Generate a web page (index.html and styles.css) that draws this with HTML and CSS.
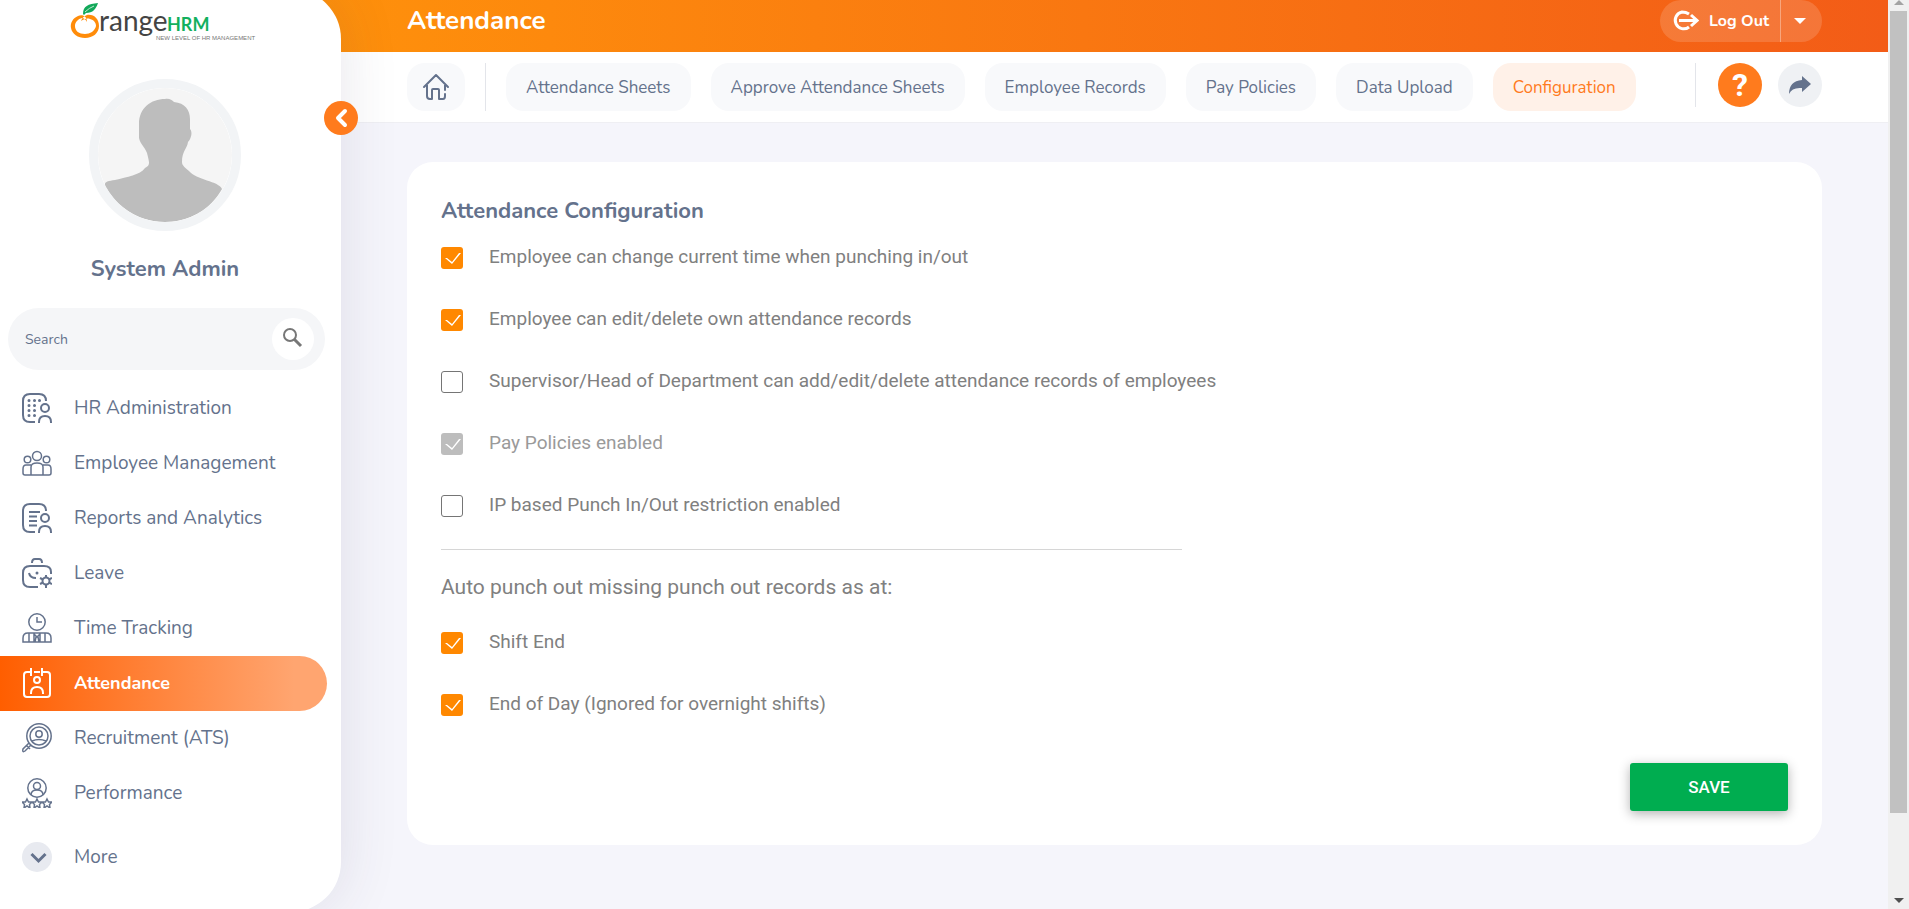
FILE: index.html
```
<!DOCTYPE html>
<html lang="en">
  <head>
    <meta charset="UTF-8" />
    <meta name="viewport" content="width=device-width, initial-scale=1.0" />
    <title>Attendance Configuration</title>
    <link rel="stylesheet" href="styles.css">
  </head>
  <body>
    <div class="app">
      <aside class="sidebar">
        <a class="logo" href="#" aria-label="OrangeHRM">
          <svg width="190" height="40" viewBox="0 0 190 40">
            <path fill-rule="evenodd" d="M8 13C3 15 0 20 1 25C2 31 8 35 15 35C23 35 29 30 29 23C29 16 24 11 17 12C14 13 12 15 11 18C14 16 17 15 20 16C24 17 26 20 26 23C25 28 20 31 15 31C9 31 5 28 5 23C5 19 8 16 12 15C14 15 16 17 17 19C17 14 13 11 8 13Z" fill="#ff8c0a" />
            <path d="M13 11C13 3 18 1 28 0C26 6 23 10 16 10L14 12Z" fill="#12a85a" />
            <path d="M15 9Q19 5 24 3" stroke="#bfe8cf" fill="none" />
            <text x="29" y="28" class="logo-range">range</text>
            <text x="97" y="28" class="logo-hrm">HRM</text>
            <text x="86" y="37" class="logo-tag">NEW LEVEL OF HR MANAGEMENT</text>
          </svg>
        </a>

        <div class="avatar">
          <svg width="134" height="134" viewBox="0 0 134 134">
            <circle cx="67" cy="67" r="67" fill="#f5f5f5" />
            <path d="M67 11C71 10 74 12 76 14C87 15 92 22 92 31L92 41C95 44 93 51 90 54C89 61 84 63 84 74C84 78 88 80 91 83C98 92 121 93 124 101C112 122 92 134 67 134C40 134 19 119 7 98C6 93 11 93 17 92C29 89 42 87 47 80C53 77 51 74 49 65C47 59 42 56 41 50L41 36C41 20 53 11 67 11Z" fill="#bdbdbd" />
          </svg>
        </div>
        <div class="user-name">System Admin</div>

        <form class="search">
          <input type="text" class="search-input" placeholder="Search" aria-label="Search" />
          <button type="button" class="search-btn" aria-label="Search menu">
            <svg width="24" height="24" viewBox="0 0 24 24" fill="none" stroke="#777" stroke-width="2">
              <circle cx="9" cy="8" r="6" />
              <path d="M13 12L20 19" stroke-width="3" />
            </svg>
          </button>
        </form>

        <ul class="menu">
          <li>
            <a href="#">
              <svg class="icon" viewBox="0 0 30 30">
                <path d="M13 29H8Q1 29 1 22V8Q1 1 8 1H17Q24 1 24 8" />
                <circle cx="23" cy="15" r="4" />
                <path d="M17 30V29Q17 23 23 23T29 29V30" />
                <path class="dots" d="M7 7.500h.01M12.500 7.500h.01M17.500 7.500h.01M7 12.500h.01M12.500 12.500h.01M7 17.500h.01M12.500 17.500h.01M7 22.500h.01M12.500 22.500h.01" />
              </svg>
              HR Administration
            </a>
          </li>
          <li>
            <a href="#">
              <svg class="icon thin" viewBox="0 0 30 30">
                <circle cx="15" cy="8" r="4.500" />
                <circle cx="5.500" cy="11.500" r="3.300" />
                <circle cx="24.500" cy="11.500" r="3.300" />
                <path d="M9 27V19Q9 15 15 15T21 19V27M9 17H4Q1 17 1 21V25Q1 27 3 27H27Q29 27 29 25V21Q29 17 26 17H21" />
              </svg>
              Employee Management
            </a>
          </li>
          <li>
            <a href="#">
              <svg class="icon" viewBox="0 0 30 30">
                <path d="M13 29H8Q1 29 1 22V8Q1 1 8 1H17Q24 1 24 8" />
                <circle cx="23" cy="15" r="4" />
                <path d="M17 30V29Q17 23 23 23T29 29V30M7 9H18M7 13.500H15M7 18H15M7 22.500H15" />
              </svg>
              Reports and Analytics
            </a>
          </li>
          <li>
            <a href="#">
              <svg class="icon" viewBox="0 0 30 30">
                <path d="M16 29H8Q1 29 1 22V15Q1 8 8 8H22Q29 8 29 14V16M10 5Q10 1 13 1H17Q20 1 20 5M7 15Q8 20 14 20" />
                <path class="dots" d="M15 15h.01" />
                <circle cx="24" cy="23" r="3.500" />
                <path d="M24 17V20M24 26V30M18 20L21 21.500M27 24.500L30 26M18 26L21 24.500M27 21.500L30 20" />
              </svg>
              Leave
            </a>
          </li>
          <li>
            <a href="#">
              <svg class="icon thin" viewBox="0 0 30 30">
                <circle cx="15" cy="9" r="8.200" />
                <path d="M15 4V9H20M1 29V25Q1 20 6 20H24Q29 20 29 25V29ZM7 20V29M23 20V29M12 20V29M18 20V29M12 21L15 24L18 21M13 29L14 24H16L17 29" />
              </svg>
              Time Tracking
            </a>
          </li>
          <li>
            <a href="#" class="active">
              <svg class="icon" viewBox="0 0 30 30">
                <path d="M9 4H5Q2 4 2 7V26Q2 29 5 29H25Q28 29 28 26V7Q28 4 25 4H21M12 4H18M9 0V8M20 0V8" />
                <circle cx="15" cy="12" r="3" />
                <path d="M9 26V25Q9 19 15 19T21 25V26" />
              </svg>
              Attendance
            </a>
          </li>
          <li>
            <a href="#">
              <svg class="icon thin" viewBox="0 0 30 30">
                <circle cx="17" cy="13" r="12.200" />
                <circle cx="17" cy="13" r="9" />
                <circle cx="17" cy="11" r="3.200" />
                <path d="M10 18Q17 15 24 18M9 22L3 28Q0 30 1 26L7 20M5 23L8 26" />
              </svg>
              Recruitment (ATS)
            </a>
          </li>
          <li>
            <a href="#">
              <svg class="icon thin" viewBox="0 0 30 30">
                <circle cx="15" cy="10" r="9.200" />
                <circle cx="15" cy="8" r="3.500" />
                <path d="M9 17Q9 12 15 12T21 17" />
                <path d="M5 21L6.500 24H10L7.500 26.500L8 30L5 28L2 30L2.500 26.500L0 24H3.500ZM15 21L16.500 24H20L17.500 26.500L18 30L15 28L12 30L12.500 26.500L10 24H13.500ZM25 21L26.500 24H30L27.500 26.500L28 30L25 28L22 30L22.500 26.500L20 24H23.500Z" />
              </svg>
              Performance
            </a>
          </li>
          <li class="more">
            <a href="#">
              <svg class="icon" viewBox="0 0 30 30">
                <circle class="more-bg" cx="15" cy="15" r="15" />
                <path d="M9.500 12L16.500 19L23.500 12" stroke-width="3" />
              </svg>
              More
            </a>
          </li>
        </ul>

        <button type="button" class="collapse" aria-label="Collapse menu">
          <svg width="34" height="34" viewBox="0 0 34 34" fill="none" stroke="#fff" stroke-width="4">
            <path d="M21 10L14 17L21 24" stroke-linecap="round" stroke-linejoin="round" />
          </svg>
        </button>
      </aside>

      <div class="main">
        <header class="top-bar">
          <h1>Attendance</h1>
          <div class="logout">
            <button type="button" class="logout-btn">
              <svg width="28" height="22" viewBox="0 0 28 22" fill="none" stroke="#fff" stroke-width="3">
                <path d="M18 4Q15 2 11 2A8.500 8.500 0 1 0 18 17" />
                <path d="M8 10.500H25M20 5L26 10.500L20 16" />
              </svg>
              Log Out
            </button>
            <button type="button" class="logout-more" aria-label="Account options">
              <svg width="12" height="6" viewBox="0 0 12 6"><path d="M0 0H12L6 6Z" fill="#fff" /></svg>
            </button>
          </div>
        </header>

        <nav class="tabs">
          <a href="#" class="tab home" aria-label="Home">
            <svg width="28" height="28" viewBox="0 0 28 28" fill="none" stroke="#64728c" stroke-width="2" stroke-linecap="round" stroke-linejoin="round">
              <path d="M2 14L14 2L26 14M5 12V23Q5 26 8 26H10V17Q10 16 11 16H16Q17 16 17 17V26H21Q23 26 23 23V21M23 12V17" />
            </svg>
          </a>
          <span class="divider"></span>
          <a href="#" class="tab">Attendance Sheets</a>
          <a href="#" class="tab">Approve Attendance Sheets</a>
          <a href="#" class="tab">Employee Records</a>
          <a href="#" class="tab">Pay Policies</a>
          <a href="#" class="tab">Data Upload</a>
          <a href="#" class="tab selected">Configuration</a>
          <div class="tools">
            <button type="button" class="round-btn help" aria-label="Help">?</button>
            <button type="button" class="round-btn share" aria-label="Share">
              <svg width="24" height="22" viewBox="0 0 24 22"><path d="M14 2L23 10L14 18V14Q4 13 1 20Q1 7 14 6Z" fill="#64728c" /></svg>
            </button>
          </div>
        </nav>

        <main class="content">
          <form class="card">
            <h2>Attendance Configuration</h2>
            <label class="option"><input type="checkbox" checked />Employee can change current time when punching in/out</label>
            <label class="option"><input type="checkbox" checked />Employee can edit/delete own attendance records</label>
            <label class="option"><input type="checkbox" />Supervisor/Head of Department can add/edit/delete attendance records of employees</label>
            <label class="option disabled"><input type="checkbox" checked disabled />Pay Policies enabled</label>
            <label class="option"><input type="checkbox" />IP based Punch In/Out restriction enabled</label>
            <hr />
            <p class="sub-title">Auto punch out missing punch out records as at:</p>
            <label class="option"><input type="checkbox" checked />Shift End</label>
            <label class="option"><input type="checkbox" checked />End of Day (Ignored for overnight shifts)</label>
            <div class="actions">
              <button type="button" class="save">SAVE</button>
            </div>
          </form>
        </main>
      </div>
    </div>

    <div class="scrollbar">
      <svg width="10" height="5" viewBox="0 0 10 5"><path d="M0 5H10L5 0Z" fill="#a3a3a3" /></svg>
      <div class="thumb"></div>
      <svg width="10" height="5" viewBox="0 0 10 5"><path d="M0 0H10L5 5Z" fill="#505050" /></svg>
    </div>
  </body>
</html>
```
FILE: styles.css
```
* {
  box-sizing: border-box;
}
body {
  margin: 0;
  height: 100vh;
  overflow: hidden;
  background-color: #f5f5fb;
  color: #64728c;
  font-family: Nunito, Lato, sans-serif;
}
a {
  color: inherit;
  text-decoration: none;
}
button {
  border: 0;
  padding: 0;
  font-family: inherit;
  cursor: pointer;
}
svg {
  display: block;
  flex: none;
}
.app {
  display: flex;
  margin-top: -11px;
  padding-right: 21px;
}

/* sidebar */
.sidebar {
  position: relative;
  z-index: 2;
  flex: none;
  width: 341px;
  min-height: calc(100vh + 14px);
  padding-top: 14px;
  background-color: #fff;
  border-radius: 0 50px 50px 0;
  box-shadow: 0 0 60px rgba(60, 50, 90, 0.12);
}
.logo {
  display: block;
  width: 190px;
  margin-left: 70px;
}
.logo-range {
  font: 28px Lato, sans-serif;
  fill: #444;
}
.logo-hrm {
  font: bold 18px Lato, sans-serif;
  fill: #12b05e;
}
.logo-tag {
  font: 6px "Liberation Sans", sans-serif;
  fill: #777;
}
.avatar {
  width: 152px;
  height: 152px;
  margin: 36px 0 0 89px;
  border: 9px solid #f2f4f6;
  border-radius: 50%;
  overflow: hidden;
}
.user-name {
  width: 330px;
  margin-top: 23px;
  font-size: 22px;
  font-weight: bold;
  line-height: 30px;
  text-align: center;
}
.search {
  display: flex;
  align-items: center;
  width: 317px;
  height: 62px;
  margin: 24px 0 11px 8px;
  padding: 0 11px 0 17px;
  background-color: #f5f6f8;
  border-radius: 31px;
}
.search-input {
  flex: 1;
  min-width: 0;
  border: 0;
  padding: 0;
  outline: none;
  background: none;
  color: #64728c;
  font: 14px Nunito, Lato, sans-serif;
}
.search-input::placeholder {
  color: #64728c;
}
.search-btn {
  display: flex;
  align-items: center;
  justify-content: center;
  width: 42px;
  height: 42px;
  background-color: #fff;
  border-radius: 50%;
}
.menu {
  margin: 0;
  padding: 0;
  list-style: none;
}
.menu a {
  display: flex;
  align-items: center;
  gap: 22px;
  width: 327px;
  height: 55px;
  padding: 0 0 2px 22px;
  font-size: 19px;
}
.menu .active {
  color: #fff;
  font-size: 18px;
  font-weight: bold;
  background: linear-gradient(to right, #ff5e00, #ffa570 90%);
  border-radius: 0 28px 28px 0;
}
.menu .more {
  margin-top: 9px;
}
.icon {
  width: 30px;
  height: 30px;
  fill: none;
  stroke: currentColor;
  stroke-width: 2;
}
.icon.thin {
  stroke-width: 1.500;
}
.dots {
  stroke-width: 3;
  stroke-linecap: round;
}
.more-bg {
  fill: #e8eaf0;
  stroke: none;
}
.collapse {
  position: absolute;
  top: 112px;
  right: -17px;
  width: 34px;
  height: 34px;
  background-color: #ff7b1d;
  border-radius: 50%;
}

/* header */
.main {
  flex: 1;
  min-width: 0;
}
.top-bar {
  display: flex;
  align-items: center;
  justify-content: space-between;
  height: 63px;
  margin-left: -60px;
  padding: 0 66px 0 126px;
  background: linear-gradient(to right, #ff920b, #f35c17);
  color: #fff;
}
h1 {
  margin: 0;
  font-size: 26px;
}
.logout {
  display: flex;
  height: 42px;
  background-color: rgba(255, 255, 255, 0.15);
  border-radius: 21px;
}
.logout button {
  background: none;
  color: #fff;
}
.logout-btn {
  display: flex;
  align-items: center;
  justify-content: center;
  gap: 10px;
  width: 120px;
  font-size: 16px;
  font-weight: bold;
}
.logout .logout-more {
  display: flex;
  align-items: center;
  justify-content: center;
  width: 42px;
  padding-right: 4px;
  border-left: 1px solid rgba(255, 255, 255, 0.35);
}
.tabs {
  display: flex;
  gap: 20px;
  height: 71px;
  padding: 11px 66px;
  background-color: #fff;
  border-bottom: 1px solid #efeff3;
}
.tab {
  display: flex;
  align-items: center;
  justify-content: center;
  height: 48px;
  padding: 0 20px;
  font-size: 17px;
  white-space: nowrap;
  background-color: #f8f9fb;
  border-radius: 18px;
}
.home {
  width: 58px;
  padding: 0;
}
.divider {
  width: 1px;
  height: 48px;
  background-color: #e3e5ea;
}
.selected {
  color: #ff7b1d;
  background-color: #fff1e8;
}
.tools {
  display: flex;
  gap: 16px;
  height: 44px;
  margin-left: auto;
  padding-left: 22px;
  border-left: 1px solid #e3e5ea;
}
.round-btn {
  display: flex;
  align-items: center;
  justify-content: center;
  width: 44px;
  height: 44px;
  border-radius: 50%;
}
.help {
  background-color: #ff7b1d;
  color: #fff;
  font: bold 32px Roboto, sans-serif;
}
.share {
  background-color: #eff1f4;
}

/* config form */
.content {
  padding: 39px 66px 64px;
}
.card {
  min-height: 683px;
  padding: 33px 34px;
  background-color: #fff;
  border-radius: 26px;
  color: #808080;
  font-family: Roboto, sans-serif;
}
h2 {
  margin: 0 0 20px;
  color: #64728c;
  font: bold 22px/32px Nunito, Lato, sans-serif;
}
.option {
  display: flex;
  gap: 26px;
  height: 22px;
  margin: 0 0 40px;
  font-size: 19px;
  line-height: 20px;
}
.option input {
  appearance: none;
  flex: none;
  width: 22px;
  height: 22px;
  margin: 0;
  border: 1px solid #757575;
  border-radius: 3px;
}
.option input:checked {
  border: 0;
  background-color: #ff8800;
}
.option input:checked::before {
  content: "";
  display: block;
  width: 22px;
  height: 22px;
  background-color: #fff;
  clip-path: polygon(4px 11px, 6px 11px, 11px 15px, 18px 6px, 20px 6px, 11px 17px);
}
.option.disabled {
  color: #9a9a9a;
}
.option.disabled input {
  background-color: #bdbdbd;
}
hr {
  width: 55%;
  height: 1px;
  margin: -8px 0 23px;
  border: 0;
  background-color: #d6d6d6;
}
.sub-title {
  margin: 0 0 31px;
  font-size: 21px;
  line-height: 28px;
}
.actions {
  display: flex;
  justify-content: flex-end;
  padding-top: 7px;
}
.save {
  width: 158px;
  height: 48px;
  background-color: #00ad50;
  color: #fff;
  font: 500 17px Roboto, sans-serif;
  border-radius: 3px;
  box-shadow: 0 3px 12px rgba(0, 0, 0, 0.3);
}

.scrollbar {
  position: fixed;
  z-index: 3;
  top: 0;
  right: 0;
  display: flex;
  flex-direction: column;
  align-items: center;
  width: 21px;
  height: 100vh;
  background-color: #f0f0f0;
}
.scrollbar .thumb {
  width: 17px;
  height: 88.2vh;
  margin: 6px 0 auto;
  background-color: #c1c1c1;
}
.scrollbar svg:last-child {
  margin-bottom: 6px;
}
```
